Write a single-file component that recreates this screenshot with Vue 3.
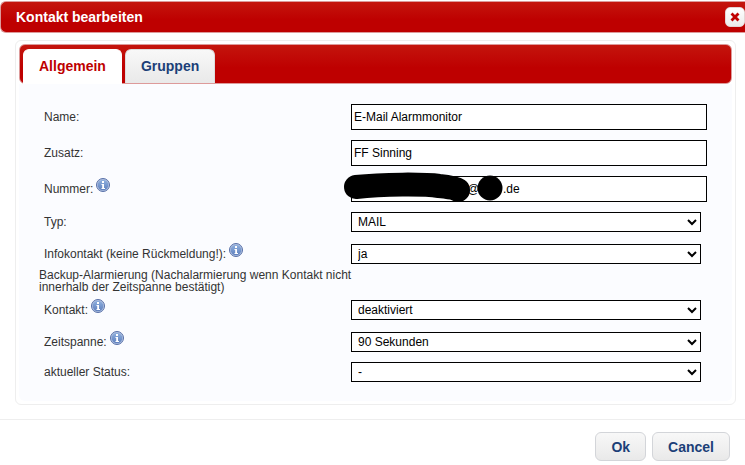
<script setup>
import { reactive, ref } from 'vue'

const nb = '\u00a0'
const tabs = ['Allgemein', 'Gruppen']
const activeTab = ref('Allgemein')

const fields = [
  { id: 'name', label: 'Name:', type: 'text' },
  { id: 'zusatz', label: 'Zusatz:', type: 'text' },
  { id: 'nummer', label: 'Nummer:', type: 'text', info: true, redacted: true },
  { id: 'typ', label: 'Typ:', type: 'select' },
  { id: 'info', label: 'Infokontakt (keine Rückmeldung!):', type: 'select', info: true },
  { id: 'backup', type: 'note', label: 'Backup-Alarmierung (Nachalarmierung wenn Kontakt nicht innerhalb der Zeitspanne bestätigt)' },
  { id: 'kontakt', label: 'Kontakt:', type: 'select', info: true },
  { id: 'zeitspanne', label: 'Zeitspanne:', type: 'select', info: true },
  { id: 'status', label: 'aktueller Status:', type: 'select' }
]

const values = reactive({
  name: 'E-Mail Alarmmonitor',
  zusatz: 'FF Sinning',
  nummer: nb.repeat(34) + '@' + nb.repeat(7) + '.de',
  typ: 'MAIL',
  info: 'ja',
  kontakt: 'deaktiviert',
  zeitspanne: '90 Sekunden',
  status: '-'
})
const options = {
  typ: ['MAIL'],
  info: ['ja'],
  kontakt: ['deaktiviert'],
  zeitspanne: ['90 Sekunden'],
  status: ['-']
}
</script>

<template>
  <div class="dialog">
    <header class="titlebar">
      <h1>Kontakt bearbeiten</h1>
      <button type="button" class="close" aria-label="Close">
        <svg viewBox="0 0 10 10" width="10" height="10">
          <path d="M2.5 2.5 L7.5 7.5 M7.5 2.5 L2.5 7.5" stroke="#c00000" stroke-width="2.8" stroke-linecap="square" />
        </svg>
      </button>
    </header>

    <section class="panel">
      <nav class="tabs">
        <button
          v-for="tab in tabs"
          :key="tab"
          type="button"
          class="tab"
          :class="{ active: tab === activeTab }"
          @click="activeTab = tab"
        >{{ tab }}</button>
      </nav>

      <form class="content" @submit.prevent>
        <template v-for="f in fields" :key="f.id">
          <p v-if="f.type === 'note'" class="note">{{ f.label }}</p>
          <div v-else class="row" :class="[f.type, { tall: f.info }]">
            <div class="caption">
              <label :for="f.id">{{ f.label }}</label>
              <svg v-if="f.info" class="info" viewBox="0 0 14 14" width="14" height="14">
                <defs>
                  <linearGradient :id="'shade-' + f.id" x1="0" y1="0" x2="0" y2="1">
                    <stop offset="0" stop-color="#8fb0de" />
                    <stop offset="1" stop-color="#5f80be" />
                  </linearGradient>
                </defs>
                <circle cx="7" cy="7" r="6.5" fill="#b4c4e2" stroke="#5870a8" />
                <circle cx="7" cy="7" r="5.3" :fill="`url(#shade-${f.id})`" />
                <path d="M6 3h2v2H6z M5.5 6H8v4h1v1H5.500v-1h.7V7h-.7z" fill="#fff" />
              </svg>
            </div>
            <div class="control">
              <input v-if="f.type === 'text'" :id="f.id" v-model="values[f.id]" type="text">
              <select v-else :id="f.id" v-model="values[f.id]">
                <option v-for="o in options[f.id]" :key="o">{{ o }}</option>
              </select>
              <svg v-if="f.redacted" class="marker" viewBox="0 0 160 32" width="160" height="32">
                <path d="M13 14 C40 11 82 11 96 13 C106 14 112 15 115 17" fill="none" stroke="#000" stroke-width="24" stroke-linecap="round" stroke-linejoin="round" />
                <circle cx="147" cy="15" r="12.5" />
              </svg>
            </div>
          </div>
        </template>
      </form>
    </section>

    <footer class="actions">
      <button type="button">Ok</button>
      <button type="button">Cancel</button>
    </footer>
  </div>
</template>

<style>
body {
  background: #fff;
}
</style>

<style scoped>
.dialog,
.dialog button,
.dialog input,
.dialog select {
  font-family: "Liberation Sans", Arial, sans-serif;
}
.dialog {
  padding-top: 1px;
  font-size: 12px;
  color: #333;
}
.titlebar {
  display: flex;
  align-items: center;
  justify-content: space-between;
  box-sizing: border-box;
  height: 32px;
  padding-left: 15px;
  border: 1px solid #dd9a9a;
  border-right: 0;
  border-radius: 6px 0 0 6px;
  background: linear-gradient(#c4150d, #be0000 60%);
}
h1 {
  margin: 0;
  font-size: 14px;
  color: #fff;
}
.close {
  display: flex;
  align-items: center;
  justify-content: center;
  width: 20px;
  height: 20px;
  padding: 0;
  border: 1px solid #e4d4d4;
  border-radius: 5px;
  background: linear-gradient(#fff, #ececec);
}
.panel {
  margin: 7px 9px 0 15px;
  padding: 3px;
  border: 1px solid #eee;
  border-radius: 6px;
}
.tabs {
  display: flex;
  align-items: flex-end;
  gap: 3px;
  box-sizing: border-box;
  height: 40px;
  padding-left: 3px;
  border: 1px solid #dd9a9a;
  border-radius: 6px;
  background: linear-gradient(#c4150d, #be0000 60%);
}
.tab {
  height: 34px;
  padding: 0 15px 2px;
  border: 1px solid #ddd;
  border-bottom: 0;
  border-radius: 6px 6px 0 0;
  background: linear-gradient(#f8f8f8, #e9e9e9);
  font-size: 14px;
  font-weight: bold;
  color: #1c3f78;
}
.tab.active {
  height: 35px;
  margin-bottom: -1px;
  border-color: #fff;
  background: #fff;
  color: #be0000;
}
.content {
  padding: 15px 25px 14px 20px;
  border-radius: 0 0 6px 6px;
  background: #fbfcff;
}
.row {
  display: grid;
  grid-template-columns: 312fr 356fr;
  align-items: end;
  padding: 5px 0;
}
.row.select.tall {
  padding-top: 7px;
}
.caption {
  display: flex;
  align-items: center;
  gap: 3px;
  height: 20px;
  padding-left: 5px;
}
.text .caption {
  height: 26px;
}
.info {
  margin-bottom: 8px;
}
.control {
  position: relative;
  display: flex;
}
input,
select {
  box-sizing: border-box;
  width: 100%;
  border: 1px solid #000;
  border-radius: 0;
  background: #fff;
  font-size: 12px;
  color: #000;
}
input {
  height: 26px;
  padding: 0 2px;
}
select {
  height: 20px;
  margin-right: 6px;
  padding: 0 2px;
}
.marker {
  position: absolute;
  left: -8px;
  top: -3px;
  overflow: visible;
}
.note {
  width: 48%;
  margin: 0;
  line-height: 12px;
}
.actions {
  display: flex;
  justify-content: flex-end;
  gap: 6px;
  margin-top: 14px;
  padding: 12px 15px 4px;
  border-top: 1px solid #eee;
}
.actions button {
  height: 29px;
  padding: 0 15px;
  border: 1px solid #d3d5d9;
  border-radius: 6px;
  background: linear-gradient(#f8f8f8, #e9e9e9);
  font-size: 14px;
  font-weight: bold;
  color: #1c3f78;
}
</style>
